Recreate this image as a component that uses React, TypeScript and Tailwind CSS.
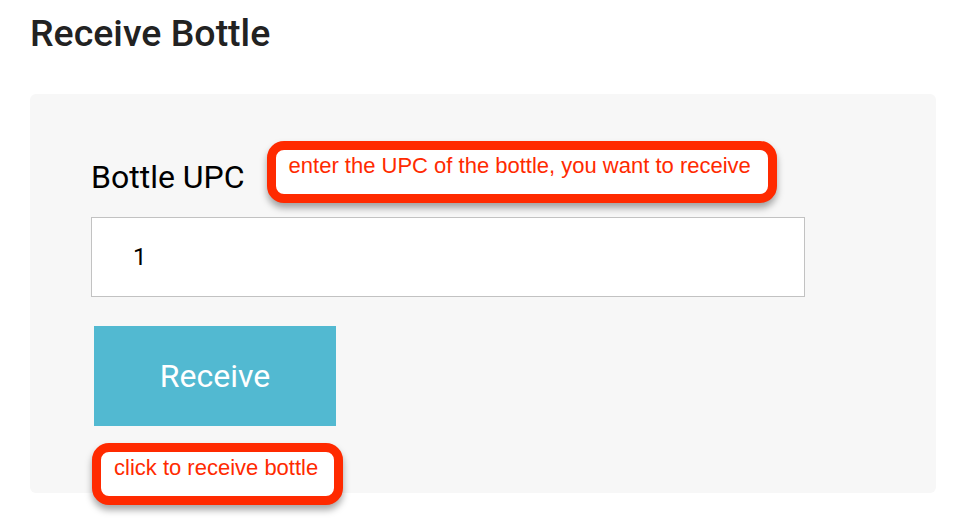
import React from 'react';

const callout =
  'box-border h-[62px] shrink-0 rounded-[17px] border-[9px] border-[#ff2a00] bg-white pl-[13px] pt-[3px] text-[22px] leading-[26px] text-[#ff2a00] shadow-[0_5px_7px_rgba(0,0,0,0.35)] font-["Liberation_Sans",Arial,sans-serif]';

export default function App() {
  return (
    <div className="min-h-[526px] bg-white px-[30px] pt-[11px] font-['Roboto',sans-serif]">
      <h1 className="text-[37.5px] font-medium leading-[44px] text-[#222222]">Receive Bottle</h1>

      <div className="mt-[39px] flex w-[906px] flex-col items-start rounded-[6px] bg-[#f7f7f7] pl-[61px] pt-[47px]">
        <div className="flex items-start">
          <label className="mt-[17px] text-[32px] leading-[38px] text-black">Bottle UPC</label>
          <div className={`ml-[22px] w-[510px] ${callout}`}>enter the UPC of the bottle, you want to receive</div>
        </div>

        <input
          type="text"
          defaultValue="1"
          className="mt-[14px] box-border h-[80px] w-[714px] shrink-0 border border-[#c2c2c2] bg-white pl-[41px] text-[24px] text-black outline-none"
        />

        <button className="ml-[3px] mt-[29px] h-[100px] w-[242px] shrink-0 bg-[#52b9d1] text-[32px] text-white">
          Receive
        </button>

        <div className={`-mb-[12px] ml-[1px] mt-[17px] w-[251px] ${callout}`}>click to receive bottle</div>
      </div>
    </div>
  );
}
